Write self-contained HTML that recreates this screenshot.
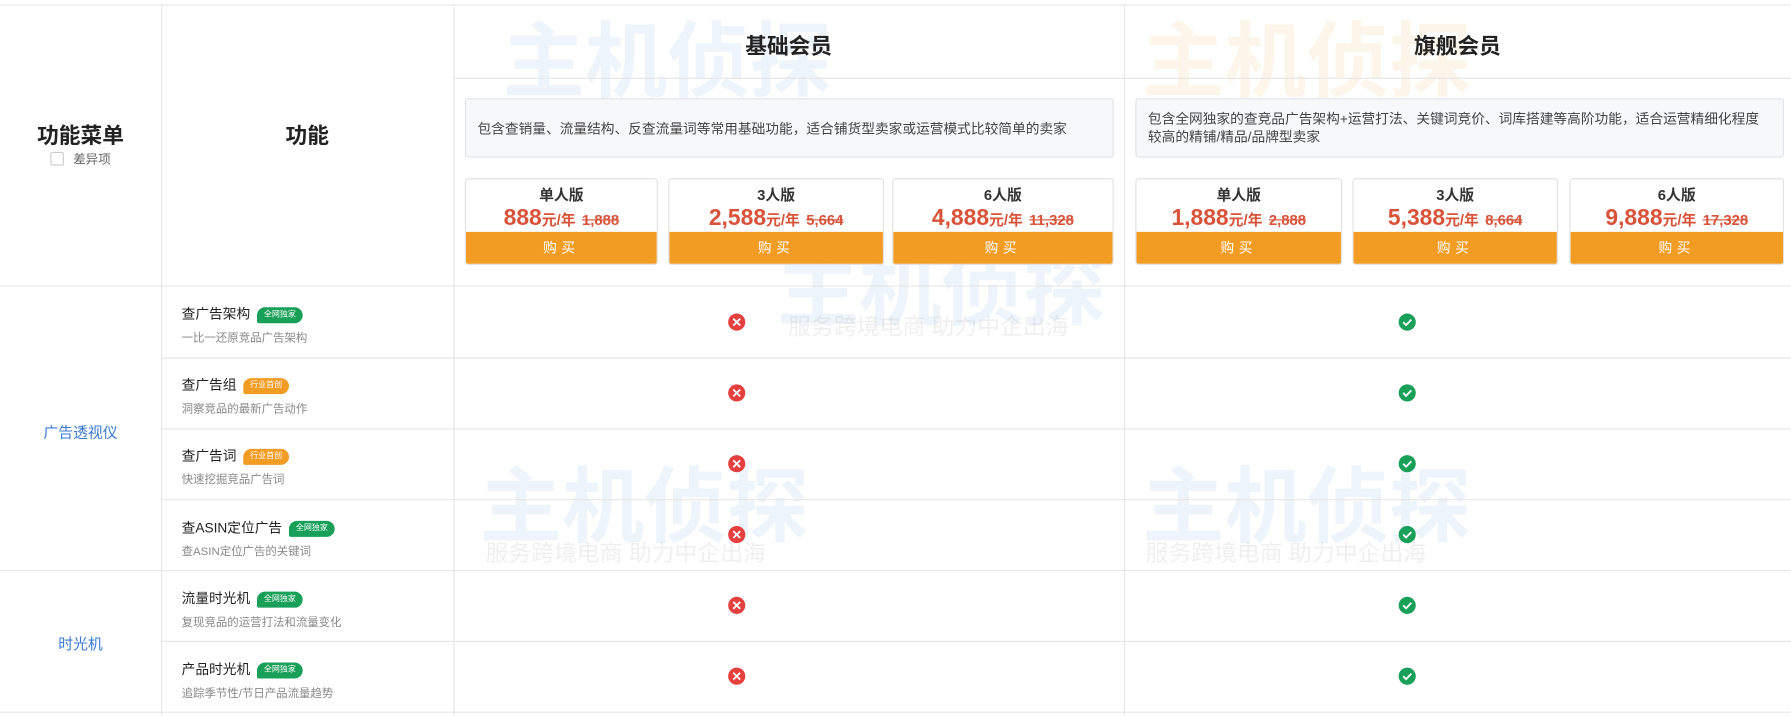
<!DOCTYPE html>
<html><head><meta charset="utf-8"><style>
*{margin:0;padding:0;box-sizing:border-box}
html,body{width:1791px;height:716px;overflow:hidden;background:#fff}
#w{position:absolute;left:0;top:0;width:1568px;height:626px;overflow:hidden;transform:scale(1.14222);transform-origin:0 0;font-family:"Liberation Sans","Noto Sans CJK SC",sans-serif;color:#333}
.a{position:absolute}
.hl{position:absolute;height:1px;background:#e6e6e6}
.vl{position:absolute;width:1px;background:#e6e6e6}
.t{position:absolute;text-align:center;white-space:nowrap}
.box{position:absolute;top:86px;height:52px;background:#f7f8fa;border:1px solid #dfe2e8;border-radius:3px;font-size:12px;color:#444;padding:9px 10px;line-height:16px}
.card{position:absolute;top:156px;height:76px;border:1px solid #e2e2e2;border-radius:3px;text-align:center;overflow:hidden}
.card .n{font-size:13px;font-weight:bold;color:#333;margin-top:6px;line-height:16px}
.card .p{color:#d9533a;font-weight:bold;font-size:20px;line-height:24px;white-space:nowrap}
.card .p small{font-size:13px}
.card .p s{font-size:13px}
.card .b{position:absolute;left:0;right:0;bottom:0;height:28px;background:#f39c24;color:#fff;font-size:12px;line-height:28px;letter-spacing:4px}
.f{position:absolute;left:159px;font-size:12px;color:#222}
.f .s{font-size:10px;color:#888;margin-top:4px}
.tag{display:inline-block;font-size:7px;color:#fff;border-radius:8px 8px 8px 2px;padding:2px 6px;margin-left:6px;vertical-align:2px;line-height:10px}
.g{background:#18a058}.o{background:#f39c24}
.wm{position:absolute;color:rgba(90,150,220,.10);font-weight:bold;white-space:nowrap}
.ws{position:absolute;font-size:20px;color:rgba(120,120,120,.12);white-space:nowrap}
</style></head><body><div id="w">
<div class="wm" style="left:440px;top:-5px;font-size:72px">主机侦探</div>
<div class="ws" style="left:455px;top:80px">服务跨境电商 助力中企出海</div>
<div class="wm" style="left:1000px;top:-5px;font-size:72px;color:rgba(240,170,80,.12)">主机侦探</div>
<div class="ws" style="left:1003px;top:80px">服务跨境电商 助力中企出海</div>
<div class="wm" style="left:680px;top:195px;font-size:72px">主机侦探</div>
<div class="ws" style="left:690px;top:270px">服务跨境电商 助力中企出海</div>
<div class="wm" style="left:420px;top:385px;font-size:72px">主机侦探</div>
<div class="ws" style="left:425px;top:468px">服务跨境电商 助力中企出海</div>
<div class="wm" style="left:1000px;top:385px;font-size:72px">主机侦探</div>
<div class="ws" style="left:1003px;top:468px">服务跨境电商 助力中企出海</div>

<div class="hl" style="left:0;width:1568px;top:4px"></div>
<div class="hl" style="left:397px;width:1171px;top:68px"></div>
<div class="hl" style="left:0;width:1568px;top:250px"></div>
<div class="hl" style="left:141px;width:1427px;top:313px"></div>
<div class="hl" style="left:141px;width:1427px;top:375px"></div>
<div class="hl" style="left:141px;width:1427px;top:437px"></div>
<div class="hl" style="left:0;width:1568px;top:499px"></div>
<div class="hl" style="left:141px;width:1427px;top:561px"></div>
<div class="hl" style="left:0;width:1568px;top:623px"></div>
<div class="vl" style="left:141px;top:4px;height:622px"></div>
<div class="vl" style="left:397px;top:4px;height:622px"></div>
<div class="vl" style="left:984px;top:4px;height:622px"></div>

<div class="t" style="left:0;width:141px;top:104px;font-size:19px;font-weight:bold;color:#222">功能菜单</div>
<div class="t" style="left:0;width:141px;top:131px;font-size:11px;color:#666"><span style="display:inline-block;width:12px;height:12px;border:1px solid #ccc;border-radius:2px;vertical-align:-2px;margin-right:8px"></span>差异项</div>
<div class="t" style="left:141px;width:256px;top:104px;font-size:19px;font-weight:bold;color:#222">功能</div>
<div class="t" style="left:397px;width:587px;top:26px;font-size:19px;font-weight:bold;color:#222">基础会员</div>
<div class="t" style="left:984px;width:584px;top:26px;font-size:19px;font-weight:bold;color:#222">旗舰会员</div>

<div class="box" style="left:407px;width:568px;padding-top:18px">包含查销量、流量结构、反查流量词等常用基础功能，适合铺货型卖家或运营模式比较简单的卖家</div>
<div class="box" style="left:994px;width:568px">包含全网独家的查竞品广告架构+运营打法、关键词竞价、词库搭建等高阶功能，适合运营精细化程度较高的精铺/精品/品牌型卖家</div>

<div class="card" style="left:407px;width:169px"><div class="n">单人版</div><div class="p">888<small>元/年</small> <s>1,888</s></div><div class="b">购买</div></div>
<div class="card" style="left:585px;width:189px"><div class="n">3人版</div><div class="p">2,588<small>元/年</small> <s>5,664</s></div><div class="b">购买</div></div>
<div class="card" style="left:781px;width:194px"><div class="n">6人版</div><div class="p">4,888<small>元/年</small> <s>11,328</s></div><div class="b">购买</div></div>
<div class="card" style="left:994px;width:181px"><div class="n">单人版</div><div class="p">1,888<small>元/年</small> <s>2,888</s></div><div class="b">购买</div></div>
<div class="card" style="left:1184px;width:180px"><div class="n">3人版</div><div class="p">5,388<small>元/年</small> <s>8,664</s></div><div class="b">购买</div></div>
<div class="card" style="left:1374px;width:188px"><div class="n">6人版</div><div class="p">9,888<small>元/年</small> <s>17,328</s></div><div class="b">购买</div></div>

<div class="t" style="left:0;width:141px;top:368px;font-size:13px;color:#3a7bd5">广告透视仪</div>
<div class="t" style="left:0;width:141px;top:553px;font-size:13px;color:#3a7bd5">时光机</div>

<div class="f" style="top:266px">查广告架构<span class="tag g">全网独家</span><div class="s">一比一还原竞品广告架构</div></div>
<div class="f" style="top:328px">查广告组<span class="tag o">行业首创</span><div class="s">洞察竞品的最新广告动作</div></div>
<div class="f" style="top:390px">查广告词<span class="tag o">行业首创</span><div class="s">快速挖掘竞品广告词</div></div>
<div class="f" style="top:453px">查ASIN定位广告<span class="tag g">全网独家</span><div class="s">查ASIN定位广告的关键词</div></div>
<div class="f" style="top:515px">流量时光机<span class="tag g">全网独家</span><div class="s">复现竞品的运营打法和流量变化</div></div>
<div class="f" style="top:577px">产品时光机<span class="tag g">全网独家</span><div class="s">追踪季节性/节日产品流量趋势</div></div>

<svg class="a" style="left:0;top:0" width="1568" height="626">
<defs>
<g id="x"><circle r="7.5" fill="#e5403d"/><path d="M-3,-3L3,3M3,-3L-3,3" stroke="#fff" stroke-width="1.6"/></g>
<g id="c"><circle r="7.5" fill="#18a058"/><path d="M-3.5,0L-1,2.6L3.6,-2.2" stroke="#fff" stroke-width="1.6" fill="none"/></g>
</defs>
<use href="#x" x="645" y="282"/><use href="#c" x="1232" y="282"/>
<use href="#x" x="645" y="344"/><use href="#c" x="1232" y="344"/>
<use href="#x" x="645" y="406"/><use href="#c" x="1232" y="406"/>
<use href="#x" x="645" y="468"/><use href="#c" x="1232" y="468"/>
<use href="#x" x="645" y="530"/><use href="#c" x="1232" y="530"/>
<use href="#x" x="645" y="592"/><use href="#c" x="1232" y="592"/>
</svg>
</div></body></html>
